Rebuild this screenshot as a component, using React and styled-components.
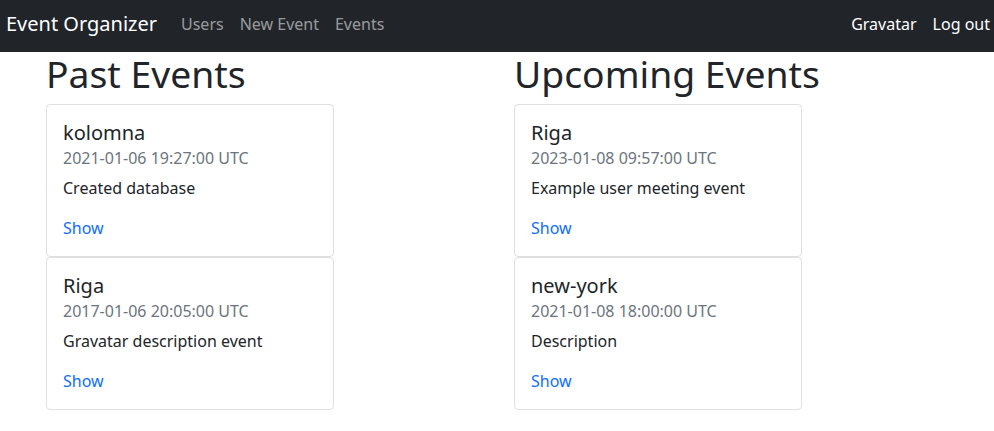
import React from 'react';
import styled, { createGlobalStyle } from "styled-components";

const GlobalStyle = createGlobalStyle`
    body{
        margin: 0;
        font-family: "Noto Sans", "Open Sans", sans-serif;
        font-size: 16px;
        line-height: 1.5;
        color: #212529;
        background: #fff;
    }
`

const Navbar = styled.nav`
    height: 52px;
    background: #212529;
    display: flex;
    align-items: center;
    padding: 0 0 4px 6px;
    box-sizing: border-box;
`

const Brand = styled.a`
    font-size: 20px;
    line-height: 30px;
    color: #fff;
    margin-right: 16px;
    text-decoration: none;
`

const NavList = styled.div`
    display: flex;
    margin-left: ${p => p.right ? "auto" : "0"};
    margin-right: ${p => p.right ? "-4px" : "0"};
`

const NavLink = styled.a`
    padding: 8px;
    color: ${p => p.light ? "#fff" : "rgba(255, 255, 255, 0.55)"};
    text-decoration: none;
`

const Main = styled.main`
    display: grid;
    grid-template-columns: 468px 468px;
    padding: 0 46px;
`

const Title = styled.h1`
    font-size: 37.3px;
    font-weight: 400;
    line-height: 44.3px;
    margin: 0 0 8px 0;
`

const Card = styled.div`
    width: 288px;
    box-sizing: border-box;
    border: 1px solid rgba(0, 0, 0, 0.125);
    border-radius: 4px;
    padding: 16px;
    .event-name{
        font-size: 20px;
        font-weight: 400;
        line-height: 24px;
        margin: 0;
    }
    .event-date{
        color: #6c757d;
        margin: 1px 0 6px 0;
    }
    .event-text{
        margin: 0 0 16px 0;
    }
    a{
        color: #0d6efd;
        text-decoration: none;
    }
`

const events = {
    past: [
        {name: "kolomna", date: "2021-01-06 19:27:00 UTC", text: "Created database"},
        {name: "Riga", date: "2017-01-06 20:05:00 UTC", text: "Gravatar description event"}
    ],
    upcoming: [
        {name: "Riga", date: "2023-01-08 09:57:00 UTC", text: "Example user meeting event"},
        {name: "new-york", date: "2021-01-08 18:00:00 UTC", text: "Description"}
    ]
}

const EventCard = ({name, date, text}) => {
    return(
        <Card>
            <h5 className="event-name">{name}</h5>
            <div className="event-date">{date}</div>
            <p className="event-text">{text}</p>
            <a href="#">Show</a>
        </Card>
    )
}

const EventColumn = ({title, items}) => {
    return(
        <section>
            <Title>{title}</Title>
            {items.map((item, i) => <EventCard key={i} {...item}/>)}
        </section>
    )
}

const App = () => {
    return(
        <>
            <GlobalStyle/>
            <Navbar>
                <Brand href="#">Event Organizer</Brand>
                <NavList>
                    <NavLink href="#">Users</NavLink>
                    <NavLink href="#">New Event</NavLink>
                    <NavLink href="#">Events</NavLink>
                </NavList>
                <NavList right>
                    <NavLink light href="#">Gravatar</NavLink>
                    <NavLink light href="#">Log out</NavLink>
                </NavList>
            </Navbar>
            <Main>
                <EventColumn title="Past Events" items={events.past}/>
                <EventColumn title="Upcoming Events" items={events.upcoming}/>
            </Main>
        </>
    )
}

export default App;
